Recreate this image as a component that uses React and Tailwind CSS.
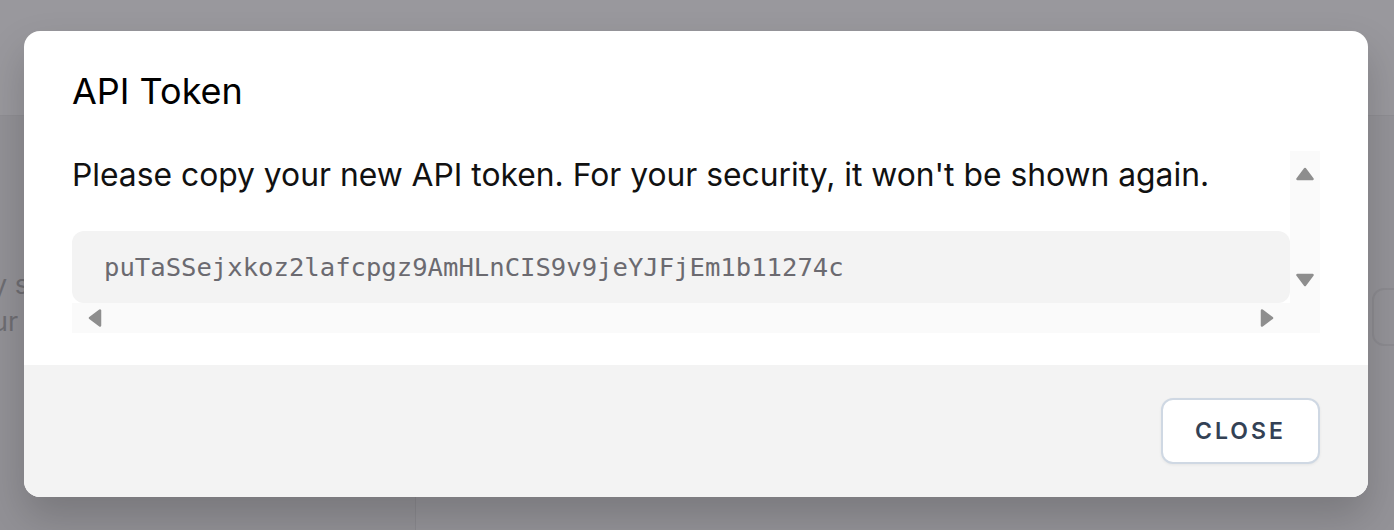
import React from "react";

function Tri({ dir }) {
  const vertical = dir === "up" || dir === "down";
  const paths = {
    up: "M9 2 L16.5 12 L1.5 12 Z",
    down: "M1.5 2 L16.5 2 L9 12 Z",
    left: "M12 1.5 L12 16.5 L2 9 Z",
    right: "M2 1.5 L12 9 L2 16.5 Z",
  };
  const w = vertical ? 18 : 14;
  const h = vertical ? 14 : 18;
  return (
    <svg width={w} height={h} viewBox={`0 0 ${w} ${h}`}>
      <path d={paths[dir]} fill="#8e8e8e" stroke="#8e8e8e" strokeWidth="2.5" strokeLinejoin="round" />
    </svg>
  );
}

export default function App() {
  return (
    <div className="relative w-[1394px] h-[530px] overflow-hidden bg-[#949398]" style={{ fontFamily: "Inter, 'Noto Sans', sans-serif" }}>
      {/* background page */}
      <div className="flex flex-col h-full">
        <div className="h-[116px] bg-[#99989d] border-b border-[#8f8e93]" />
        <div className="flex flex-1">
          <div className="w-[416px] border-r border-[#8a898e] bg-[#929196] pt-[150px] text-[27px] leading-[37px] text-[#6e6d72]">
            <div className="-ml-[8px]">y s</div>
            <div className="-ml-[8px]">ur</div>
          </div>
          <div className="flex-1 flex justify-end pt-[172px]">
            <div className="w-[40px] h-[58px] mr-[-18px] rounded-[12px] border-2 border-[#8c8b90]" />
          </div>
        </div>
      </div>

      {/* overlay + dialog */}
      <div className="absolute inset-0 flex justify-start items-start pt-[31px] pl-6">
        <div className="w-[1344px] rounded-[16px] bg-white overflow-hidden shadow-[0_20px_40px_rgba(0,0,0,0.18)]">
          <div className="px-12 pt-10 pb-8">
            <div className="text-[36px] leading-[40px] text-black">API Token</div>
            <div className="mt-10 flex flex-col w-[1248px]">
              <div className="flex">
                <div className="w-[1218px] h-[152px] overflow-hidden">
                  <div className="text-[31.8px] leading-[48px] text-[#111] whitespace-nowrap">
                    Please copy your new API token. For your security, it won't be shown again.
                  </div>
                  <div className="mt-8 h-[72px] w-[1218px] rounded-[12px] bg-[#f3f3f3] flex items-center pl-8">
                    <span
                      className="text-[25.6px] text-[#6b6a70] whitespace-nowrap"
                      style={{ fontFamily: "'DejaVu Sans Mono', 'Liberation Mono', monospace" }}
                    >
                      puTaSSejxkoz2lafcpgz9AmHLnCIS9v9jeYJFjEm1b11274c
                    </span>
                  </div>
                </div>
                <div className="w-[30px] h-[152px] bg-[#fafafa] flex flex-col items-center justify-between py-4">
                  <Tri dir="up" />
                  <Tri dir="down" />
                </div>
              </div>
              <div className="flex h-[30px]">
                <div className="w-[1218px] bg-[#fafafa] flex items-center justify-between px-4">
                  <Tri dir="left" />
                  <Tri dir="right" />
                </div>
                <div className="w-[30px] bg-[#fafafa]" />
              </div>
            </div>
          </div>
          <div className="bg-[#f3f3f3] h-[132px] px-12 flex items-center justify-end">
            <button className="w-[159px] h-[66px] rounded-[12px] bg-white border-2 border-[#cfd8e3] shadow-[0_1px_3px_rgba(0,0,0,0.06)] text-[23px] font-semibold tracking-[0.13em] text-[#334155]">
              CLOSE
            </button>
          </div>
        </div>
      </div>
    </div>
  );
}
